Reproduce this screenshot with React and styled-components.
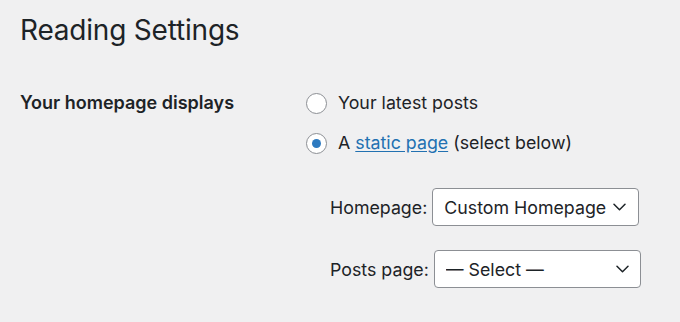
import React from 'react';
import { styled, createGlobalStyle } from 'styled-components';

const GlobalStyle = createGlobalStyle`
  html, body {
    margin: 0;
    background: #f0f0f1;
  }
  body {
    font-family: Inter, "Noto Sans", sans-serif;
    color: #1d2327;
  }
`;

const Page = styled.div`
  width: 680px;
  height: 322px;
  padding: 0 20px;
  box-sizing: border-box;
  overflow: hidden;
`;

const Title = styled.h1`
  margin: 0;
  padding: 12px 0 0;
  font-size: 28px;
  font-weight: 400;
  line-height: 36px;
  letter-spacing: -0.2px;
`;

const FormRow = styled.div`
  display: grid;
  grid-template-columns: 286px 1fr;
  margin-top: 43px;
`;

const RowLabel = styled.div`
  font-size: 18px;
  font-weight: 600;
  line-height: 24px;
`;

const Options = styled.div`
  display: flex;
  flex-direction: column;
  gap: 16px;
`;

const Choice = styled.label`
  display: flex;
  align-items: center;
  gap: 11px;
  font-size: 17.8px;
  line-height: 24px;
`;

const Radio = styled.input.attrs({ type: 'radio' })`
  appearance: none;
  margin: 0;
  width: 21px;
  height: 21px;
  border: 1px solid #8c8f94;
  border-radius: 50%;
  background: #fff;
  box-sizing: border-box;
  display: grid;
  place-items: center;
  &:checked::before {
    content: '';
    width: 9px;
    height: 9px;
    border-radius: 50%;
    background: #2d7ac0;
  }
`;

const Link = styled.a`
  color: #2271b1;
  text-decoration: underline;
  text-underline-offset: 2px;
`;

const SubFields = styled.div`
  display: flex;
  flex-direction: column;
  gap: 24px;
  margin: 33px 0 0 24px;
`;

const SubField = styled.label`
  display: flex;
  align-items: center;
  gap: ${(p) => p.$gap}px;
  font-size: 17.8px;
`;

const SelectWrap = styled.div`
  position: relative;
  width: 207px;
  height: 38px;
  flex: none;
`;

const Select = styled.select`
  appearance: none;
  box-sizing: border-box;
  width: 100%;
  height: 100%;
  margin: 0;
  padding: 0 30px 0 11px;
  border: 1px solid #8c8f94;
  border-radius: 4px;
  background: #fff;
  color: #1d2327;
  font-family: inherit;
  font-size: 17.8px;
`;

const Chevron = styled.svg`
  position: absolute;
  right: ${(p) => p.$right}px;
  top: 50%;
  transform: translateY(-50%);
  pointer-events: none;
`;

function Dropdown({ value, chevronRight = 13 }) {
  return (
    <SelectWrap>
      <Select defaultValue={value}>
        <option>{value}</option>
      </Select>
      <Chevron $right={chevronRight} width="13" height="8" viewBox="0 0 13 8" fill="none">
        <path d="M1 1.2l5.5 5.5 5.5-5.5" stroke="#1d2327" strokeWidth="1.5" strokeLinecap="round" strokeLinejoin="round" />
      </Chevron>
    </SelectWrap>
  );
}

export default function App() {
  return (
    <Page>
      <GlobalStyle />
      <Title>Reading Settings</Title>
      <FormRow>
        <RowLabel>Your homepage displays</RowLabel>
        <div>
          <Options>
            <Choice>
              <Radio name="front" />
              Your latest posts
            </Choice>
            <Choice>
              <Radio name="front" defaultChecked />
              <span>
                A <Link href="#">static page</Link> (select below)
              </span>
            </Choice>
          </Options>
          <SubFields>
            <SubField $gap={5}>
              Homepage:
              <Dropdown value="Custom Homepage" chevronRight={13} />
            </SubField>
            <SubField $gap={5}>
              Posts page:
              <Dropdown value="— Select —" chevronRight={12} />
            </SubField>
          </SubFields>
        </div>
      </FormRow>
    </Page>
  );
}
